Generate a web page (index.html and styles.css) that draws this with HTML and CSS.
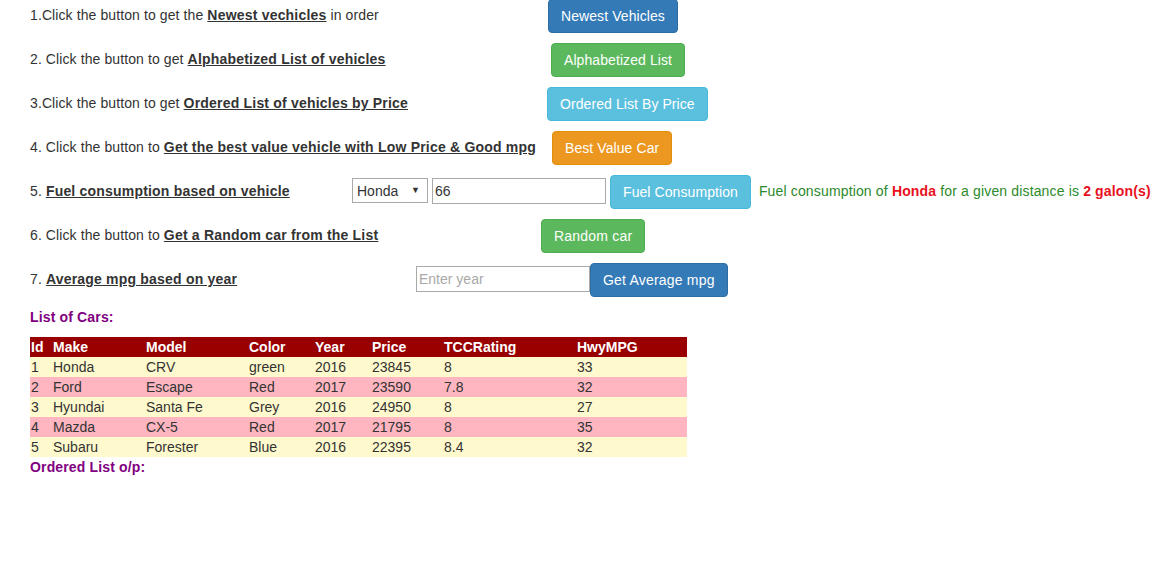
FILE: index.html
```html
<!DOCTYPE html>
<html>
<head>
<meta charset="utf-8">
<title>Vehicles</title>
<link rel="stylesheet" href="styles.css">
</head>
<body>
<div class="page">
  <div class="rows">
    <div class="row r1">
      <div class="label">1.Click the button to get the <b class="lnk">Newest vechicles</b> in order</div>
      <button class="btn primary">Newest Vehicles</button>
    </div>
    <div class="row r2">
      <div class="label">2. Click the button to get <b class="lnk">Alphabetized List of vehicles</b></div>
      <button class="btn success">Alphabetized List</button>
    </div>
    <div class="row r3">
      <div class="label">3.Click the button to get <b class="lnk">Ordered List of vehicles by Price</b></div>
      <button class="btn info">Ordered List By Price</button>
    </div>
    <div class="row r4">
      <div class="label">4. Click the button to <b class="lnk">Get the best value vehicle with Low Price &amp; Good mpg</b></div>
      <button class="btn warning">Best Value Car</button>
    </div>
    <div class="row r5">
      <div class="label">5. <b class="lnk">Fuel consumption based on vehicle</b></div>
      <div class="select-wrap">
        <select class="sel"><option>Honda</option><option>Ford</option><option>Hyundai</option><option>Mazda</option><option>Subaru</option></select>
        <span class="arrow">&#9660;</span>
      </div>
      <input class="field f66" type="text" value="66">
      <button class="btn info">Fuel Consumption</button>
      <div class="msg">Fuel consumption of <b class="red">Honda</b> for a given distance is <b class="red">2 galon(s)</b></div>
    </div>
    <div class="row r6">
      <div class="label">6. Click the button to <b class="lnk">Get a Random car from the List</b></div>
      <button class="btn success wide">Random car</button>
    </div>
    <div class="row r7">
      <div class="label">7. <b class="lnk">Average mpg based on year</b></div>
      <input class="field fyear" type="text" placeholder="Enter year">
      <button class="btn primary wide">Get Average mpg</button>
    </div>
  </div>

  <div class="title">List of Cars:</div>
  <table class="cars">
    <colgroup>
      <col class="c-id"><col class="c-make"><col class="c-model"><col class="c-color"><col class="c-year"><col class="c-price"><col class="c-tcc"><col class="c-hwy">
    </colgroup>
    <thead>
      <tr><th>Id</th><th>Make</th><th>Model</th><th>Color</th><th>Year</th><th>Price</th><th>TCCRating</th><th>HwyMPG</th></tr>
    </thead>
    <tbody>
      <tr><td>1</td><td>Honda</td><td>CRV</td><td>green</td><td>2016</td><td>23845</td><td>8</td><td>33</td></tr>
      <tr><td>2</td><td>Ford</td><td>Escape</td><td>Red</td><td>2017</td><td>23590</td><td>7.8</td><td>32</td></tr>
      <tr><td>3</td><td>Hyundai</td><td>Santa Fe</td><td>Grey</td><td>2016</td><td>24950</td><td>8</td><td>27</td></tr>
      <tr><td>4</td><td>Mazda</td><td>CX-5</td><td>Red</td><td>2017</td><td>21795</td><td>8</td><td>35</td></tr>
      <tr><td>5</td><td>Subaru</td><td>Forester</td><td>Blue</td><td>2016</td><td>22395</td><td>8.4</td><td>32</td></tr>
    </tbody>
  </table>
  <div class="title">Ordered List o/p:</div>
</div>
</body>
</html>
```

FILE: styles.css
```css
* { box-sizing: border-box; }
html, body { margin: 0; padding: 0; background: #fff; }
body {
  font-family: "Liberation Sans", Arial, Helvetica, sans-serif;
  font-size: 14px;
  line-height: 20px;
  color: #333;
}
.page { padding-left: 30px; }
.rows {
  display: flex;
  flex-direction: column;
  gap: 10px;
  margin-top: -1px;
}
.row {
  display: flex;
  align-items: center;
  height: 34px;
  white-space: nowrap;
}
.label { flex: none; margin-top: -2px; letter-spacing: 0.1px; }
.lnk { text-decoration: underline; font-weight: bold; letter-spacing: 0.2px; }
.r1 .label { width: 518px; }
.r2 .label { width: 521px; }
.r3 .label { width: 517px; }
.r4 .label { width: 522px; }
.r5 .label { width: 322px; }
.r6 .label { width: 511px; }
.r7 .label { width: 386px; }

.btn {
  font-family: inherit;
  font-size: 14px;
  line-height: 20px;
  letter-spacing: 0.08px;
  padding: 6px 12px;
  height: 34px;
  border: 1px solid transparent;
  border-radius: 4px;
  color: #fff;
  cursor: pointer;
  flex: none;
}
.btn.wide { letter-spacing: 0.2px; }
.primary { background: #337ab7; border-color: #2e6da4; }
.success { background: #5cb85c; border-color: #4cae4c; }
.info { background: #5bc0de; border-color: #46b8da; }
.warning { background: #ec971f; border-color: #e08e0b; }

.select-wrap {
  position: relative;
  width: 76px;
  height: 25px;
  margin-top: -3px;
  flex: none;
}
.sel {
  appearance: none;
  -webkit-appearance: none;
  width: 76px;
  height: 25px;
  border: 1px solid #a9a9a9;
  border-radius: 0;
  background: #fff;
  font-family: inherit;
  font-size: 14px;
  color: #333;
  padding: 0 0 0 4px;
}
.arrow {
  position: absolute;
  right: 8px;
  top: 6px;
  font-size: 9px;
  line-height: 12px;
  color: #333;
  pointer-events: none;
}
.field {
  width: 174px;
  height: 26px;
  border: 1px solid #a9a9a9;
  border-radius: 0;
  font-family: inherit;
  font-size: 14px;
  color: #333;
  padding: 0 2px;
  flex: none;
  outline: none;
}
.field::placeholder { color: #a9a9a9; }
.f66 { margin-left: 4px; margin-top: -2px; }
.r5 .btn { margin-left: 4px; }
.msg { margin-left: 8px; margin-top: -2px; color: #2c8a2c; letter-spacing: 0.15px; }
.red { color: #e8101c; }
.fyear { margin-top: -2px; }

.title {
  color: #800080;
  font-weight: bold;
  line-height: 20px;
  letter-spacing: 0.15px;
}
.rows + .title { margin-top: 10px; margin-bottom: 10px; }

.cars {
  border-collapse: collapse;
  table-layout: fixed;
  width: 657px;
}
.cars th, .cars td {
  padding: 0 1px;
  height: 20px;
  line-height: 20px;
  text-align: left;
  white-space: nowrap;
}
.cars th { background: #990000; color: #fff; font-weight: bold; }
.cars tbody tr:nth-child(odd) td { background: #fffacd; }
.cars tbody tr:nth-child(even) td { background: #ffb6c1; }
.c-id { width: 22px; }
.c-make { width: 93px; }
.c-model { width: 103px; }
.c-color { width: 66px; }
.c-year { width: 57px; }
.c-price { width: 72px; }
.c-tcc { width: 133px; }
.c-hwy { width: 111px; }
```
